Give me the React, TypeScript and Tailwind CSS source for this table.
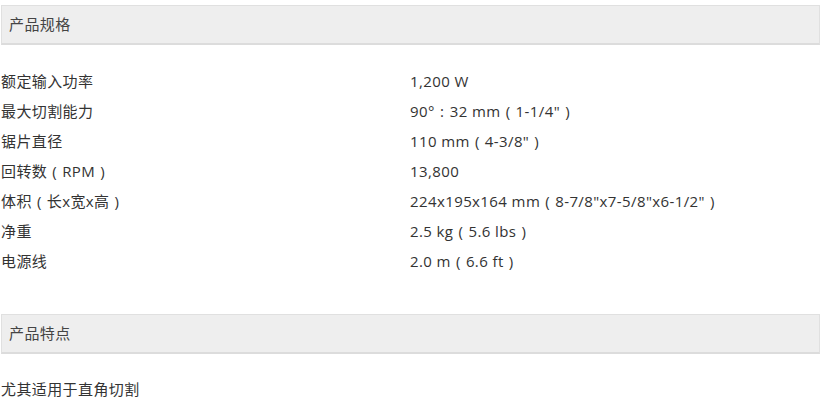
const specs = [
  { label: "额定输入功率", value: "1,200 W" },
  { label: "最大切割能力", value: "90°：32 mm（1-1/4\"）" },
  { label: "锯片直径", value: "110 mm（4-3/8\"）" },
  { label: "回转数（RPM）", value: "13,800" },
  { label: "体积（长x宽x高）", value: "224x195x164 mm（8-7/8\"x7-5/8\"x6-1/2\"）" },
  { label: "净重", value: "2.5 kg（5.6 lbs）" },
  { label: "电源线", value: "2.0 m（6.6 ft）" },
];

// full-width punctuation drawn centred in its em box, as the original font does
const centred: Record<string, string> = { "（": "(", "）": ")", "：": ":" };

function Text({ text }: { text: string }) {
  return (
    <>
      {text.split(/([（）：])/).map((part, i) =>
        centred[part] ? (
          <span key={i} className="inline-block w-[15px] text-center">
            {centred[part]}
          </span>
        ) : (
          <span key={i}>{part}</span>
        )
      )}
    </>
  );
}

function SectionTitle({ children }: { children: string }) {
  return (
    <div className="h-[40px] flex items-center pl-[7px] bg-[#eeeeee] border border-[#e0e0e0] border-b-2 border-b-[#dcdcdc] text-[15px] text-[#444]">
      {children}
    </div>
  );
}

export default function App() {
  return (
    <div
      className="w-[822px] h-[411px] bg-white pl-px pr-[2px] pt-[5px] text-[#333] text-[15px] tracking-[0.4px] overflow-hidden"
      style={{ fontFamily: '"Open Sans", "Noto Sans CJK SC", sans-serif' }}
    >
      <SectionTitle>产品规格</SectionTitle>

      <div className="mt-[21px] grid grid-cols-[409px_1fr]">
        {specs.map((s) => (
          <div key={s.label} className="contents">
            <div className="h-[30px] leading-[30px] whitespace-nowrap">
              <Text text={s.label} />
            </div>
            <div className="h-[30px] leading-[30px] whitespace-nowrap">
              <Text text={s.value} />
            </div>
          </div>
        ))}
      </div>

      <div className="mt-[38px]">
        <SectionTitle>产品特点</SectionTitle>
      </div>

      <div className="mt-[20px] h-[30px] leading-[30px]">尤其适用于直角切割</div>
    </div>
  );
}
